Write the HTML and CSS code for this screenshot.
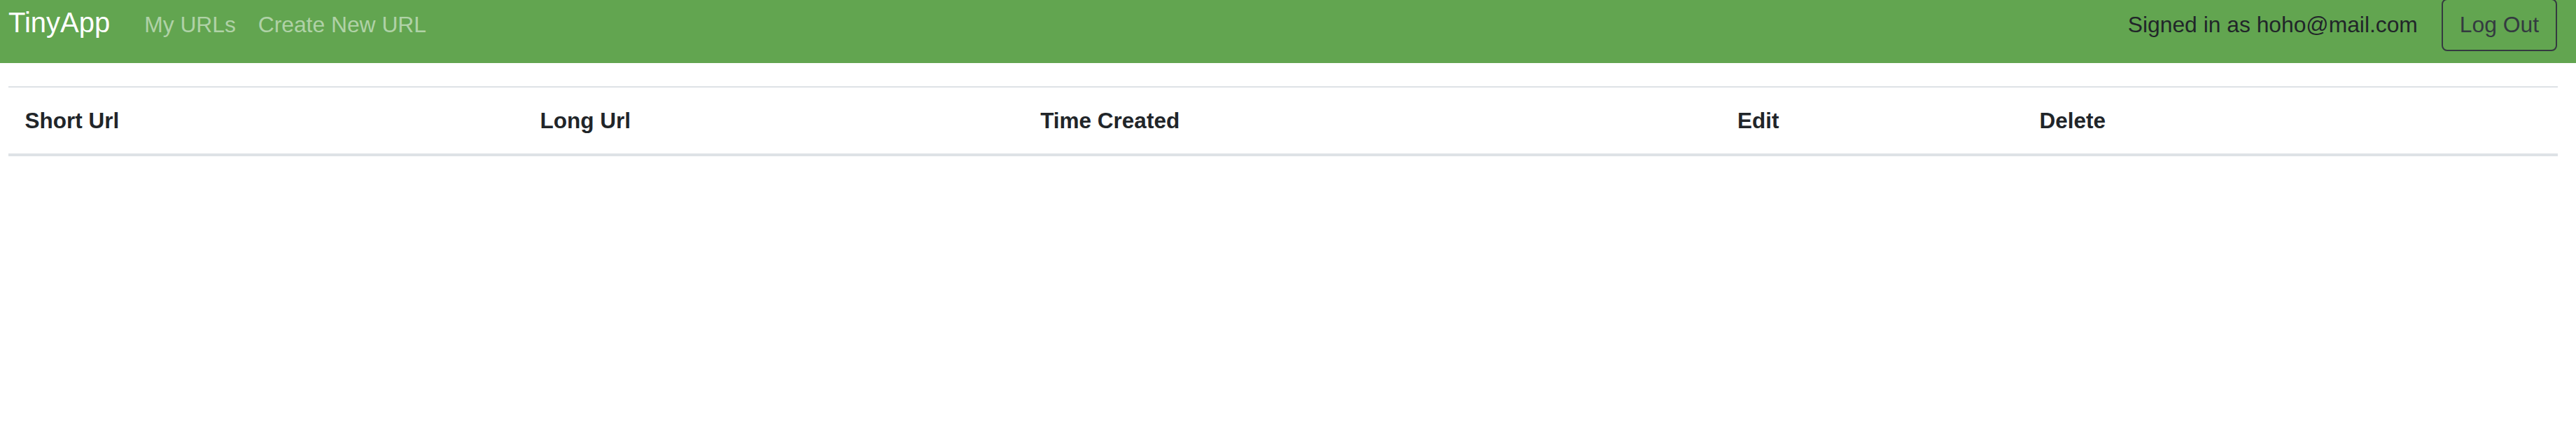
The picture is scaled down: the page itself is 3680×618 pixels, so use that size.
FILE: index.html
```html
<!DOCTYPE html>
<html lang="en">
<head>
<meta charset="utf-8">
<title>TinyApp</title>
<link rel="stylesheet" href="styles.css">
</head>
<body>
<nav class="navbar">
  <a class="brand" href="#">TinyApp</a>
  <div class="nav-links">
    <a class="nav-link" href="#">My URLs</a>
    <a class="nav-link" href="#">Create New URL</a>
  </div>
  <div class="nav-right">
    <span class="signed-in">Signed in as hoho@mail.com</span>
    <button class="btn-logout" type="button">Log Out</button>
  </div>
</nav>
<main class="content">
  <table class="url-table">
    <thead>
      <tr>
        <th>Short Url</th>
        <th>Long Url</th>
        <th>Time Created</th>
        <th>Edit</th>
        <th>Delete</th>
        <th></th>
      </tr>
    </thead>
    <tbody></tbody>
  </table>
</main>
</body>
</html>
```

FILE: styles.css
```css
* {
  box-sizing: border-box;
}

html, body {
  margin: 0;
  padding: 0;
  background: #ffffff;
}

body {
  font-family: "Liberation Sans", Arial, sans-serif;
  font-size: 31.8px;
  line-height: 1.5;
  color: #212529;
}

.navbar {
  display: flex;
  align-items: baseline;
  height: 90px;
  padding: 0 27px 0 12px;
  background: #62a550;
}

.brand {
  font-size: 40px;
  line-height: 1.2;
  color: #ffffff;
  text-decoration: none;
  margin-right: 33px;
}

.nav-links {
  display: flex;
  align-items: baseline;
}

.nav-link {
  padding: 0 15.9px;
  color: rgba(255, 255, 255, 0.5);
  text-decoration: none;
}

.nav-right {
  margin-left: auto;
  display: flex;
  align-items: baseline;
}

.signed-in {
  color: #212529;
  margin-right: 34px;
}

.btn-logout {
  margin-top: -2px;
  font-family: inherit;
  font-size: 31.8px;
  line-height: 1.5;
  color: #343a40;
  background: transparent;
  border: 2px solid #343a40;
  border-radius: 8px;
  padding: 12px 24px 11px;
}

.content {
  padding: 33px 26px 0 12px;
}

.url-table {
  width: 100%;
  border-collapse: collapse;
  font-size: 31.5px;
}

.url-table th {
  text-align: left;
  font-weight: bold;
  padding: 23.6px;
  border-top: 2px solid #dee2e6;
  border-bottom: 4px solid #dee2e6;
  vertical-align: bottom;
}
```
